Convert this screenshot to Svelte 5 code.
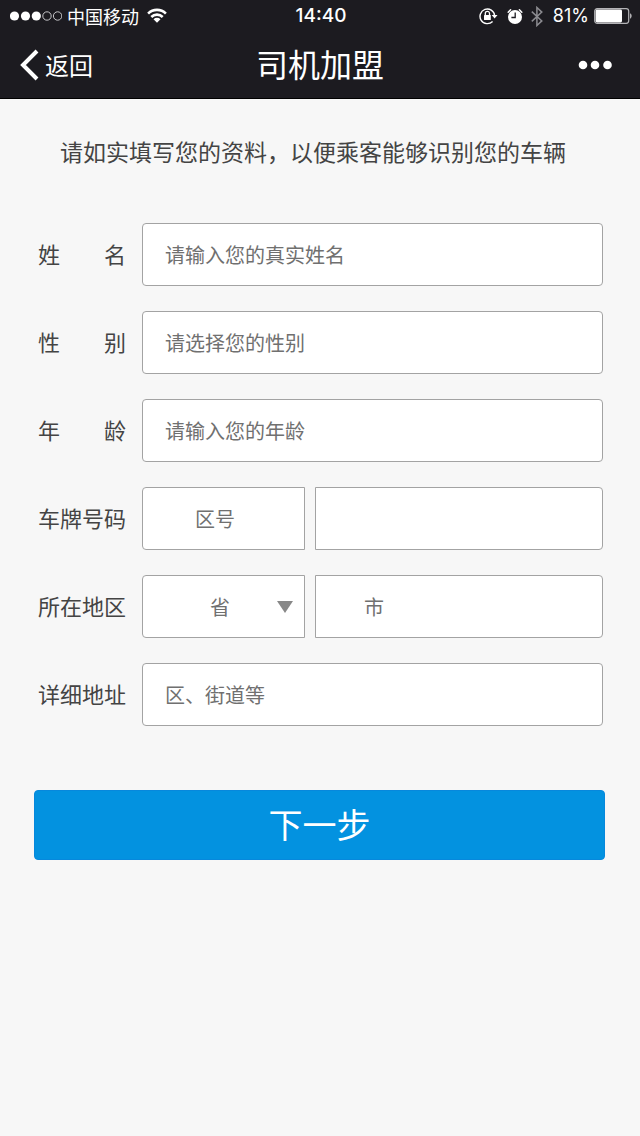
<script lang="ts">
  let name = $state("");
  let gender = $state("");
  let age = $state("");
  let plateArea = $state("");
  let plateNumber = $state("");
  let province = $state("");
  let city = $state("");
  let address = $state("");

  const genders = ["男", "女"];
  const provinces = ["北京", "上海", "广东", "浙江", "江苏"];

  function handleSubmit(event: SubmitEvent) {
    event.preventDefault();
  }
</script>

<div class="page">
  <header>
    <div class="status-bar">
      <div class="status-left">
        <svg width="52" height="10" viewBox="0 0 52 10" aria-hidden="true">
          <g fill="#fff">
            <circle cx="4.5" cy="5" r="4.6" />
            <circle cx="15.5" cy="5" r="4.6" />
            <circle cx="26.3" cy="5" r="4.6" />
          </g>
          <g fill="none" stroke="#d8d8da" stroke-width="0.9">
            <circle cx="37" cy="5" r="4.2" />
            <circle cx="47.6" cy="5" r="4.2" />
          </g>
        </svg>
        <span class="carrier">中国移动</span>
        <svg class="wifi" width="20" height="16" viewBox="0 0 20 16" aria-hidden="true">
          <g fill="none" stroke="#fff" stroke-width="2.6">
            <path d="M1.1 5.6a12.6 12.6 0 0 1 17.8 0" />
            <path d="M4.3 9a8.1 8.1 0 0 1 11.4 0" />
          </g>
          <path d="M6.5 11.3a5 5 0 0 1 7 0L10 14.8z" fill="#fff" />
        </svg>
      </div>
      <span class="time">14:40</span>
      <div class="status-right">
        <svg width="19" height="18" viewBox="0 0 19 18" aria-hidden="true">
          <path d="M13.6 14.4A7.3 7.3 0 1 1 15.6 8.6" fill="none" stroke="#fff" stroke-width="1.4" />
          <path d="M12.7 8h5.8l-2.9 3.6z" fill="#fff" />
          <rect x="5" y="8" width="6.8" height="5" rx="0.5" fill="#fff" />
          <path d="M6.3 8.4V6.4a2.1 2.1 0 0 1 4.2 0v2" fill="none" stroke="#fff" stroke-width="1.3" />
        </svg>
        <svg class="alarm" width="16" height="17" viewBox="0 0 16 17" aria-hidden="true">
          <circle cx="8" cy="9" r="7" fill="#fff" />
          <path d="M1.2 4.2l2.4-2.4M14.8 4.2l-2.4-2.4" stroke="#fff" stroke-width="1.5" stroke-linecap="round" />
          <path d="M8.2 4.6v4.9H4.4" fill="none" stroke="#1c1b20" stroke-width="1.3" />
        </svg>
        <svg class="bluetooth" width="12" height="21" viewBox="0 0 12 21" aria-hidden="true">
          <path
            d="M0.8 5.6l10 9.3-4.9 4.6v-18l4.9 4.6-10 9.3"
            fill="none"
            stroke="#8b8b90"
            stroke-width="1.5"
          />
        </svg>
        <span class="percent">81%</span>
        <svg class="battery" width="38" height="16" viewBox="0 0 38 16" aria-hidden="true">
          <rect x="0.7" y="0.7" width="34" height="14.6" rx="2.5" fill="none" stroke="#b4b4b7" stroke-width="1.2" />
          <rect x="1.6" y="1.6" width="26.4" height="12.8" rx="1.4" fill="#fff" />
          <path d="M36.2 5.3c1.8.7 1.8 4.7 0 5.4z" fill="#d0d0d2" />
        </svg>
      </div>
    </div>

    <nav>
      <button type="button" class="back">
        <svg width="19" height="32" viewBox="0 0 19 32" aria-hidden="true">
          <path d="M17 2L3 16l14 14" fill="none" stroke="#fff" stroke-width="4" />
        </svg>
        <span>返回</span>
      </button>
      <h1>司机加盟</h1>
      <button type="button" class="more" aria-label="更多">
        <svg width="34" height="10" viewBox="0 0 34 10" aria-hidden="true">
          <g fill="#fff">
            <circle cx="5" cy="5" r="4.3" />
            <circle cx="17" cy="5" r="4.3" />
            <circle cx="29.5" cy="5" r="4.3" />
          </g>
        </svg>
      </button>
    </nav>
  </header>

  <main>
    <p class="intro">请如实填写您的资料，以便乘客能够识别您的车辆</p>

    <form onsubmit={handleSubmit}>
      <div class="rows">
        <div class="row">
          <label for="name">姓　　名</label>
          <input id="name" type="text" placeholder="请输入您的真实姓名" bind:value={name} />
        </div>

        <div class="row">
          <label for="gender">性　　别</label>
          <select id="gender" bind:value={gender}>
            <option value="" disabled hidden>请选择您的性别</option>
            {#each genders as item (item)}
              <option value={item}>{item}</option>
            {/each}
          </select>
        </div>

        <div class="row">
          <label for="age">年　　龄</label>
          <input id="age" type="text" inputmode="numeric" placeholder="请输入您的年龄" bind:value={age} />
        </div>

        <div class="row">
          <label for="plate-area">车牌号码</label>
          <div class="pair">
            <input id="plate-area" class="plate-area" type="text" placeholder="区号" bind:value={plateArea} />
            <input type="text" aria-label="车牌号码" bind:value={plateNumber} />
          </div>
        </div>

        <div class="row">
          <label for="province">所在地区</label>
          <div class="pair">
            <div class="dropdown">
              <select id="province" bind:value={province}>
                <option value="" disabled hidden>省</option>
                {#each provinces as item (item)}
                  <option value={item}>{item}</option>
                {/each}
              </select>
              <svg width="16" height="12" viewBox="0 0 16 12" aria-hidden="true">
                <path d="M0 0h16L8 12z" fill="#888" />
              </svg>
            </div>
            <input class="city" type="text" placeholder="市" aria-label="市" bind:value={city} />
          </div>
        </div>

        <div class="row">
          <label for="address">详细地址</label>
          <input id="address" type="text" placeholder="区、街道等" bind:value={address} />
        </div>
      </div>

      <button type="submit" class="next">下一步</button>
    </form>
  </main>
</div>

<style>
  :global(body) {
    margin: 0;
    background: #f7f7f7;
  }

  .page {
    min-height: 100vh;
    background: #f7f7f7;
    color: #444;
    font-family: "Noto Sans CJK SC", "Liberation Sans", sans-serif;
  }

  header {
    border-bottom: 1px solid #000;
    background: #1c1b20;
    color: #fff;
  }

  .status-bar,
  nav {
    display: grid;
    grid-template-columns: 1fr auto 1fr;
    align-items: center;
  }

  .status-bar {
    height: 32px;
    padding: 0 8px 0 10px;
    font-size: 18px;
    line-height: 32px;
  }

  .status-left,
  .status-right {
    display: flex;
    align-items: center;
  }

  .status-right {
    justify-content: flex-end;
  }

  .carrier {
    margin-left: 5px;
  }

  .wifi {
    margin-left: 8px;
  }

  .time,
  .percent {
    font-family: Inter, "Liberation Sans", sans-serif;
  }

  .time {
    font-size: 19px;
    font-weight: 500;
  }

  .alarm {
    margin-left: 9px;
  }

  .bluetooth {
    margin-left: 8px;
  }

  .percent {
    margin-left: 10px;
  }

  .battery {
    margin-left: 5px;
  }

  nav {
    height: 66px;
    padding: 0 20px;
  }

  h1 {
    margin: 0;
    padding-bottom: 4px;
    font-size: 32px;
    font-weight: 400;
    line-height: 40px;
  }

  .back,
  .more {
    display: flex;
    align-items: center;
    border: 0;
    padding: 0;
    background: transparent;
    color: inherit;
    cursor: pointer;
    font: inherit;
  }

  .back {
    justify-self: start;
    gap: 6px;
    font-size: 24px;
    line-height: 32px;
  }

  .more {
    justify-self: end;
    padding-right: 8px;
  }

  .intro {
    margin: 0;
    padding: 36px 20px 0 60px;
    font-size: 23px;
    line-height: 32px;
  }

  .rows {
    display: flex;
    flex-direction: column;
    gap: 25px;
    padding: 56px 37px 0 38px;
  }

  .row {
    display: flex;
    align-items: center;
    gap: 16px;
  }

  label {
    flex: none;
    width: 88px;
    padding-bottom: 4px;
    font-size: 22px;
    line-height: 32px;
    white-space: nowrap;
  }

  input,
  select {
    box-sizing: border-box;
    flex: 1;
    width: 100%;
    min-width: 0;
    height: 63px;
    border: 1px solid #a3a3a3;
    border-radius: 4px;
    padding: 0 22px;
    appearance: none;
    background: #fff;
    color: #707070;
    font-family: inherit;
    font-size: 20px;
  }

  input::placeholder {
    color: #707070;
    opacity: 1;
  }

  .pair {
    display: grid;
    flex: 1;
    grid-template-columns: 163fr 288fr;
    gap: 10px;
    min-width: 0;
  }

  .pair > input:first-child,
  .dropdown select {
    border-radius: 4px 0 0 4px;
  }

  .pair > input:last-child {
    border-radius: 0 4px 4px 0;
  }

  .pair .plate-area {
    padding-left: 52px;
  }

  .pair .city {
    padding-left: 48px;
  }

  .dropdown {
    position: relative;
    display: flex;
  }

  .dropdown select {
    padding-left: 67px;
  }

  .dropdown svg {
    position: absolute;
    top: 50%;
    right: 12px;
    margin-top: -6px;
    pointer-events: none;
  }

  .next {
    display: block;
    width: calc(100% - 69px);
    height: 70px;
    margin: 64px 35px 0 34px;
    border: 1px solid #0788dc;
    border-radius: 4px;
    padding: 0 0 4px;
    background: #0392e0;
    color: #fff;
    cursor: pointer;
    font-family: inherit;
    font-size: 34px;
  }
</style>
